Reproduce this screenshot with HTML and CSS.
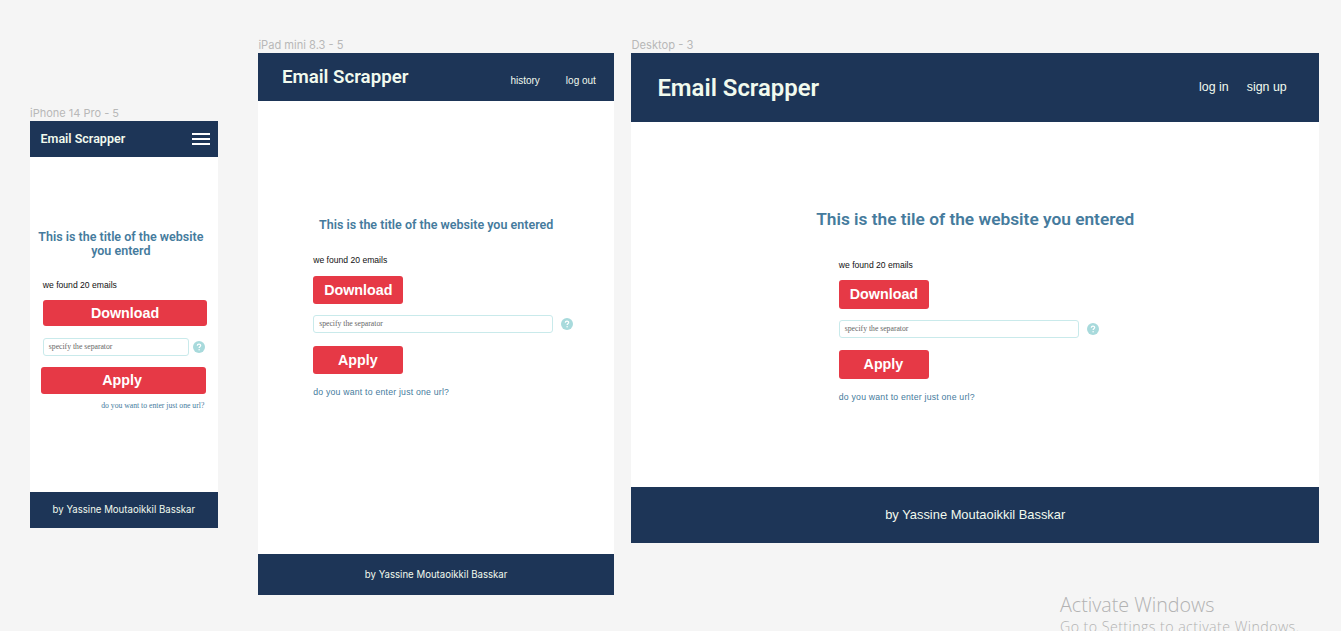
FILE: index.html
```html
<!DOCTYPE html>
<html lang="en">
<head>
<meta charset="utf-8">
<title>Email Scrapper</title>
<link rel="stylesheet" href="styles.css">
</head>
<body>
<svg class="defs" aria-hidden="true">
  <symbol id="help" viewBox="0 0 12 12">
    <circle cx="6" cy="6" r="6" fill="#a8dadc"/>
    <path d="M4.3 4.7C4.3 2.6 7.7 2.6 7.7 4.6C7.7 5.8 6.1 5.8 6.1 7.1" fill="none" stroke="#fff" stroke-width="1.2"/>
    <circle cx="6.1" cy="8.8" r=".75" fill="#fff"/>
  </symbol>
</svg>
<main class="canvas">
  <section class="artboard phone">
    <div class="label"><span>iPhone 14 Pro - 5</span></div>
    <div class="screen">
      <header class="bar"><h1 class="brand">Email Scrapper</h1>
        <svg class="menu" viewBox="0 0 18 12"><path d="M0 1H18M0 6H18M0 11H18" stroke="#fff" stroke-width="2"/></svg>
      </header>
      <div class="content">
        <h2 class="title">This is the title of the website<br>you enterd</h2>
        <div class="form">
          <p class="found">we found 20 emails</p>
          <button class="button">Download</button>
          <div class="field"><div class="input">specify the separator</div><svg class="help"><use href="#help"/></svg></div>
          <button class="button apply">Apply</button>
          <a class="link">do you want to enter just one url?</a>
        </div>
      </div>
      <footer class="footer"><span>by Yassine Moutaoikkil Basskar</span></footer>
    </div>
  </section>
  <section class="artboard tablet">
    <div class="label"><span>iPad mini 8.3 - 5</span></div>
    <div class="screen">
      <header class="bar"><h1 class="brand">Email Scrapper</h1>
        <nav class="nav"><a>history</a><a>log out</a></nav>
      </header>
      <div class="content">
        <h2 class="title">This is the title of the website you entered</h2>
        <div class="form">
          <p class="found">we found 20 emails</p>
          <button class="button">Download</button>
          <div class="field"><div class="input">specify the separator</div><svg class="help"><use href="#help"/></svg></div>
          <button class="button apply">Apply</button>
          <a class="link">do you want to enter just one url?</a>
        </div>
      </div>
      <footer class="footer"><span>by Yassine Moutaoikkil Basskar</span></footer>
    </div>
  </section>
  <section class="artboard desktop">
    <div class="label"><span>Desktop - 3</span></div>
    <div class="screen">
      <header class="bar"><h1 class="brand">Email Scrapper</h1>
        <nav class="nav"><a>log in</a><a>sign up</a></nav>
      </header>
      <div class="content">
        <h2 class="title">This is the tile of the website you entered</h2>
        <div class="form">
          <p class="found">we found 20 emails</p>
          <button class="button">Download</button>
          <div class="field"><div class="input">specify the separator</div><svg class="help"><use href="#help"/></svg></div>
          <button class="button apply">Apply</button>
          <a class="link">do you want to enter just one url?</a>
        </div>
      </div>
      <footer class="footer"><span>by Yassine Moutaoikkil Basskar</span></footer>
    </div>
  </section>
  <aside class="watermark"><p class="watermark-title">Activate Windows</p><p class="watermark-text">Go to Settings to activate Windows.</p></aside>
</main>
</body>
</html>
```
FILE: styles.css
```css
* { box-sizing: border-box; }
body { margin: 0; background: #f5f5f5; font-family: "Liberation Sans", Arial, sans-serif; }
h1, h2, p { margin: 0; }
.defs { display: none; }
.canvas { position: relative; width: 1341px; height: 631px; overflow: hidden; }
.artboard { position: absolute; }
.phone { left: 30px; top: 106px; width: 187.7px; }
.tablet { left: 258.4px; top: 38.4px; width: 355.5px; }
.desktop { left: 631.4px; top: 38.4px; width: 687.7px; }
.label { height: 15px; line-height: 14px; font-family: Inter, sans-serif; font-size: 11px; color: #b8b8b8; white-space: nowrap; }
.desktop .label { font-size: 11.2px; }
.tablet .label { font-size: 11.1px; }
.screen { display: flex; flex-direction: column; background: #fff; }
.phone .screen { height: 406.7px; }
.tablet .screen { height: 541.2px; }
.desktop .screen { height: 489.3px; }
.bar { display: flex; justify-content: space-between; align-items: center; background: #1d3557; flex: none; }
.phone .bar { height: 35.7px; padding: 0 8px 0 10.5px; }
.tablet .bar { height: 47.8px; padding: 0 18px 0 23.5px; }
.desktop .bar { height: 68.2px; padding: 0 32.4px 0 26px; }
.brand { font-family: Roboto, sans-serif; font-weight: 600; color: #f1faee; white-space: nowrap; }
.phone .brand { font-size: 12.5px; }
.tablet .brand { font-size: 18.7px; }
.desktop .brand { font-size: 23.9px; padding-top: 1px; }
.menu { width: 18px; height: 12px; }
.nav { display: flex; color: #f1faee; white-space: nowrap; }
.tablet .nav { gap: 26px; font-size: 10px; padding-top: 7px; }
.desktop .nav { gap: 18px; font-size: 12.4px; padding-bottom: 1px; }
.content { flex: 1; display: flex; flex-direction: column; }
.title { font-family: Roboto, sans-serif; font-weight: 600; color: #457b9d; text-align: center; white-space: nowrap; }
.phone .title { margin: 73px 6px 0 0; font-size: 12.5px; line-height: 14px; }
.tablet .title { margin-top: 116px; font-size: 12.5px; line-height: 16px; }
.desktop .title { margin-top: 86.8px; font-size: 17.3px; line-height: 22px; }
.form { display: flex; flex-direction: column; align-items: flex-start; }
.phone .form { width: 164.5px; margin: 21px 0 0 12.8px; }
.tablet .form { width: 260px; margin: 21px 0 0 54.8px; }
.desktop .form { width: 260px; margin: 28.2px 0 0 207.4px; }
.found { font-size: 8.6px; line-height: 12px; color: #111; white-space: nowrap; }
.button { width: 90.3px; height: 28.7px; margin: 9.5px 0 0; padding: 0; border: 0; border-radius: 3px; background: #e63946; color: #fff; font: bold 14.3px/20px "Liberation Sans", Arial, sans-serif; }
.phone .button { width: 164.5px; height: 26.8px; }
.phone .button:not(.apply) { margin-top: 9px; }
.field { display: flex; align-items: center; gap: 8px; width: 100%; margin-top: 11px; }
.phone .field { gap: 4px; margin-top: 11.5px; }
.input { width: 240px; height: 18px; padding-left: 5px; border: 1px solid #c9eaeb; border-radius: 3px; color: #666; font: 7.7px/16px "Liberation Serif", "Times New Roman", serif; white-space: nowrap; }
.phone .input { width: 146px; }
.help { width: 12px; height: 12px; flex: none; }
.button.apply { margin-top: 12.3px; padding-right: 1px; }
.phone .button.apply { margin: 11px 0 0 -1.5px; padding-right: 3px; }
.link { margin-top: 12px; font-size: 8.7px; letter-spacing: .22px; line-height: 12px; color: #457b9d; white-space: nowrap; }
.phone .link { align-self: flex-end; margin: 6px 3px 0 0; font: 7.7px/12px "Liberation Serif", "Times New Roman", serif; letter-spacing: 0; }
.footer { display: flex; align-items: center; justify-content: center; flex: none; background: #1d3557; color: #f1faee; font: 9.65px Inter, sans-serif; white-space: nowrap; }
.phone .footer { height: 35.8px; }
.tablet .footer { height: 40.6px; }
.desktop .footer { height: 55.5px; font: 12.9px "Liberation Sans", Arial, sans-serif; }
.watermark { position: absolute; left: 1060px; top: 591.5px; font-family: "Open Sans", "Noto Sans", sans-serif; color: #b2b2b2; white-space: nowrap; }
.watermark-title { font-size: 19.7px; line-height: 25px; font-weight: 350; }
.watermark-text { font-size: 14.2px; line-height: 20px; font-weight: 350; letter-spacing: .45px; }
```
